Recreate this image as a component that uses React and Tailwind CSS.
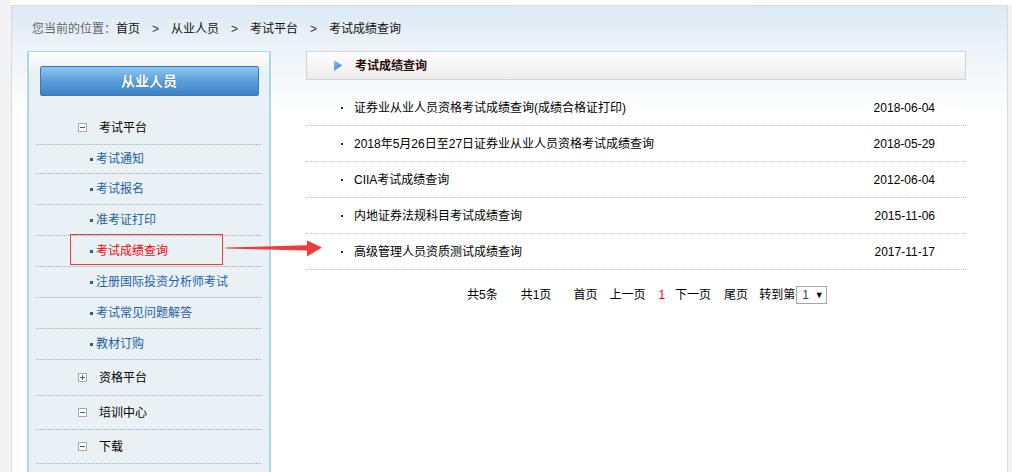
import React from 'react';

const subItems = [
  { label: '考试通知', h: 'h-[29px]' },
  { label: '考试报名', h: 'h-[31px]' },
  { label: '准考证打印', h: 'h-[31px]' },
  { label: '考试成绩查询', h: 'h-[31px]', active: true },
  { label: '注册国际投资分析师考试', h: 'h-[31px]' },
  { label: '考试常见问题解答', h: 'h-[31px]' },
  { label: '教材订购', h: 'h-[31px]' },
];

const results = [
  { title: '证券业从业人员资格考试成绩查询(成绩合格证打印)', date: '2018-06-04' },
  { title: '2018年5月26日至27日证券业从业人员资格考试成绩查询', date: '2018-05-29' },
  { title: 'CIIA考试成绩查询', date: '2012-06-04' },
  { title: '内地证券法规科目考试成绩查询', date: '2015-11-06' },
  { title: '高级管理人员资质测试成绩查询', date: '2017-11-17' },
];

// small +/- box in front of the sidebar groups
function ToggleBox({ open }) {
  return (
    <span className="relative inline-block w-[9px] h-[9px] border border-[#a8a8a8] bg-white">
      <span className="absolute left-[1px] top-[3px] w-[5px] h-[1px] bg-[#555]" />
      {!open && <span className="absolute left-[3px] top-[1px] w-[1px] h-[5px] bg-[#555]" />}
    </span>
  );
}

function GroupRow({ label, open, h }) {
  return (
    <div className={`flex items-center ${h} border-b border-dotted border-[#8fb3c3]`}>
      <span className="ml-[42px] flex items-center">
        <ToggleBox open={open} />
      </span>
      <span className="ml-[12px] text-[12px] text-black">{label}</span>
    </div>
  );
}

function SubRow({ label, h, active }) {
  return (
    <div className={`relative flex items-center ${h} border-b border-dotted border-[#8fb3c3]`}>
      <span className="ml-[54px] w-[3px] h-[3px] bg-[#1c5fa8]" />
      <span className={`ml-[3px] text-[12px] ${active ? 'text-[#ff0000]' : 'text-[#1c5fa8]'}`}>{label}</span>
      {active && (
        <span className="absolute -top-[2px] left-[34px] w-[153px] h-[31px] border border-[#f23a3a]" />
      )}
    </div>
  );
}

function Sidebar() {
  return (
    <div className="w-[244px] shrink-0 border-x-2 border-t border-[#aad9e6] bg-[linear-gradient(to_bottom,#ffffff_0px,#e9f1f4_22px,#e9f1f4_100%)] pb-[40px]">
      <div className="mt-[14px] mx-auto w-[219px] h-[30px] rounded-[2px] border border-[#3a79b6] bg-[linear-gradient(to_bottom,#8fc8f0,#5a9fdc_50%,#3c82c4)] flex items-center justify-center">
        <span className="text-white text-[14px] font-bold [text-shadow:0_0_1px_#2a5f95]">从业人员</span>
      </div>
      <div className="mt-[15px] ml-[7px] mr-[8px]">
        <GroupRow label="考试平台" open h="h-[34px]" />
        {subItems.map((it) => (
          <SubRow key={it.label} {...it} />
        ))}
        <GroupRow label="资格平台" h="h-[36px]" />
        <GroupRow label="培训中心" open h="h-[34px]" />
        <GroupRow label="下载" open h="h-[34px]" />
      </div>
    </div>
  );
}

function Pagination() {
  return (
    <div className="mt-[16px] flex items-center h-[18px] pl-[161px] text-[12px] text-black">
      <span>共5条</span>
      <span className="ml-[23px]">共1页</span>
      <span className="ml-[22px]">首页</span>
      <span className="ml-[12px]">上一页</span>
      <span className="ml-[13px] text-[#ff0000]">1</span>
      <span className="ml-[10px]">下一页</span>
      <span className="ml-[13px]">尾页</span>
      <span className="ml-[11px]">转到第</span>
      <span className="ml-[1px] w-[31px] h-[18px] border border-[#a5a5a5] bg-white flex items-center pl-[5px]">
        <span className="text-[#1b3f9a]">1</span>
        <span className="ml-[6px] text-[9px] leading-none">▼</span>
      </span>
    </div>
  );
}

function Content() {
  return (
    <div className="ml-[35px] w-[660px] shrink-0">
      <div className="h-[29px] border border-[#d6d6d6] bg-[linear-gradient(to_bottom,#fefefe,#ededed)] flex items-center">
        <svg className="ml-[27px]" width="8" height="11" viewBox="0 0 8 11">
          <defs>
            <linearGradient id="tri" x1="0" y1="0" x2="1" y2="1">
              <stop offset="0" stopColor="#9cc6ef" />
              <stop offset="1" stopColor="#2f6fc0" />
            </linearGradient>
          </defs>
          <polygon points="0,0 8,5.5 0,11" fill="url(#tri)" />
        </svg>
        <span className="ml-[13px] text-[12px] font-bold text-[#2a0c0c]">考试成绩查询</span>
      </div>
      <div className="mt-[10px]">
        {results.map((r) => (
          <div key={r.title} className="h-[36px] flex items-center border-b border-dotted border-[#c4c4c4] text-[12px] text-black">
            <span className="ml-[35px] w-[2px] h-[2px] bg-[#222]" />
            <span className="ml-[11px] flex-1">{r.title}</span>
            <span className="mr-[31px]">{r.date}</span>
          </div>
        ))}
      </div>
      <Pagination />
    </div>
  );
}

export default function App() {
  return (
    <div className="relative h-[472px] w-[1012px] overflow-hidden bg-[#f3f3f3] font-['Liberation_Sans','Noto_Sans_CJK_SC',sans-serif]">
      <div className="ml-[11px] h-[5px] bg-white" />
      <div className="ml-[11px] w-[997px] h-[480px] border-l border-t border-r border-[#dadada] bg-[linear-gradient(to_bottom,#dce9f2_0px,#edf4f9_45px,#ffffff_110px)]">
        <div className="pt-[15px] pl-[20px] h-[45px] text-[12px] leading-[16px] flex">
          <span className="text-[#666]">您当前的位置：</span>
          <span className="text-[#111]">首页</span>
          <span className="mx-[12px] text-[#333]">&gt;</span>
          <span className="text-[#111]">从业人员</span>
          <span className="mx-[12px] text-[#333]">&gt;</span>
          <span className="text-[#111]">考试平台</span>
          <span className="mx-[12px] text-[#333]">&gt;</span>
          <span className="text-[#111]">考试成绩查询</span>
        </div>
        <div className="flex pl-[15px]">
          <Sidebar />
          <Content />
        </div>
      </div>
      {/* red annotation arrow */}
      <svg className="absolute left-[226px] top-[238px]" width="98" height="22" viewBox="0 0 98 22">
        <polygon points="0,9.6 81,7.2 81,2.5 96,9.5 81,18.5 81,12.6 0,10.6" fill="#f23b3b" />
      </svg>
    </div>
  );
}
